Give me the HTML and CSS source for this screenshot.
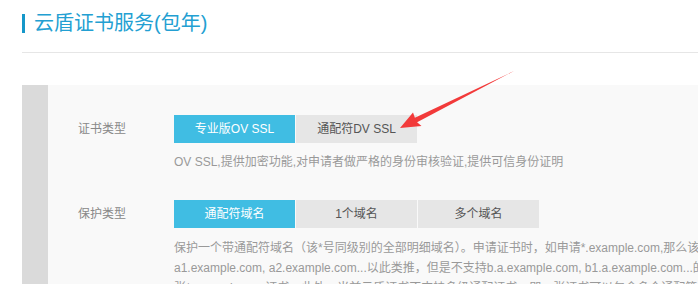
FILE: index.html
```html
<!DOCTYPE html>
<html lang="zh-CN">
<head>
<meta charset="utf-8">
<title>云盾证书服务(包年)</title>
<link rel="stylesheet" href="styles.css">
</head>
<body>
<div class="page">
  <div class="header">
    <span class="accent"></span>
    <h1 class="title">云盾证书服务(包年)</h1>
  </div>
  <div class="panel">
    <div class="strip"></div>
    <div class="form">
      <div class="row">
        <div class="label">证书类型</div>
        <div class="field">
          <div class="options">
            <span class="opt active">专业版OV SSL</span>
            <span class="opt">通配符DV SSL</span>
          </div>
          <p class="desc">OV SSL,提供加密功能,对申请者做严格的身份审核验证,提供可信身份证明</p>
        </div>
      </div>
      <div class="row">
        <div class="label">保护类型</div>
        <div class="field">
          <div class="options">
            <span class="opt active">通配符域名</span>
            <span class="opt">1个域名</span>
            <span class="opt">多个域名</span>
          </div>
          <p class="desc long">保护一个带通配符域名（该*号同级别的全部明细域名）。申请证书时，如申请*.example.com,那么该证书可以保护<br>a1.example.com, a2.example.com...以此类推，但是不支持b.a.example.com, b1.a.example.com...的保护<br>张*.example.com证书。此外，当前云盾证书不支持多级通配证书，即一张证书可以包含多个通配符域名</p>
        </div>
      </div>
    </div>
  </div>
  <svg class="arrow" width="698" height="284" viewBox="0 0 698 284" aria-hidden="true">
    <polygon points="514,71 417.1,122.2 421.5,126 400,128 413,112.5 414.9,117.8" fill="#f23a3a"/>
  </svg>
</div>
</body>
</html>
```

FILE: styles.css
```css
html, body {
  margin: 0;
  padding: 0;
  overflow: hidden;
  background: #ffffff;
}

body {
  font-family: "Liberation Sans", "Noto Sans CJK SC", sans-serif;
  width: 698px;
  height: 284px;
}

.page {
  position: relative;
  padding-left: 22px;
  height: 284px;
}

.header {
  display: flex;
  align-items: center;
  height: 53px;
  border-bottom: 1px solid #e6e6e6;
  box-sizing: border-box;
  padding-bottom: 6px;
}

.accent {
  width: 3px;
  height: 19px;
  background: #1597c9;
  margin-right: 9px;
}

.title {
  margin: 0;
  font-size: 20px;
  font-weight: normal;
  color: #239fd2;
  line-height: 24px;
}

.panel {
  display: flex;
  margin-top: 32px;
  background: #f9f9f9;
  height: 220px;
}

.strip {
  width: 26px;
  flex: none;
  background: #dadada;
}

.form {
  padding: 30px 0 0 30px;
  display: flex;
  flex-direction: column;
  gap: 28px;
}

.row {
  display: flex;
  align-items: flex-start;
}

.label {
  width: 96px;
  flex: none;
  height: 28px;
  line-height: 28px;
  font-size: 12px;
  color: #888888;
}

.field {
  display: flex;
  flex-direction: column;
}

.options {
  display: flex;
  gap: 1px;
}

.opt {
  width: 121px;
  height: 28px;
  line-height: 28px;
  text-align: center;
  font-size: 12px;
  background: #e6e6e6;
  color: #555555;
}

.opt.active {
  background: #40bde3;
  color: #ffffff;
}

.desc {
  margin: 9px 0 0;
  font-size: 12px;
  line-height: 20px;
  color: #999999;
  white-space: nowrap;
}

.desc.long {
  margin-top: 10px;
}

.arrow {
  position: absolute;
  left: 0;
  top: 0;
  pointer-events: none;
}
```
